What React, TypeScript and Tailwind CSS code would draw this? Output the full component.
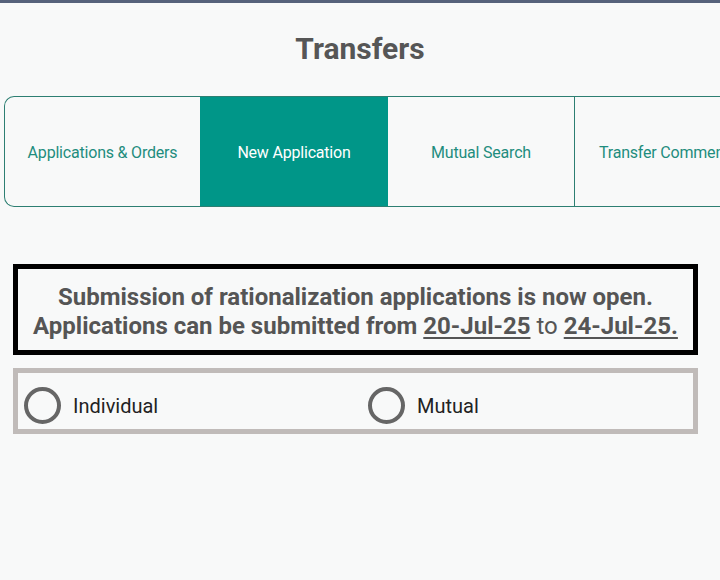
import React from "react";

export default function App() {
  const tabs = [
    { label: "Applications & Orders", w: "w-[195px]", active: false },
    { label: "New Application", w: "w-[188px]", active: true },
    { label: "Mutual Search", w: "w-[186px]", active: false },
    { label: "Transfer Comments", w: "w-[186px]", active: false },
  ];
  return (
    <div
      className="w-[720px] h-[580px] overflow-hidden bg-[#f8f9f9] flex flex-col"
      style={{ fontFamily: "Roboto, 'Liberation Sans', sans-serif" }}
    >
      <div className="h-[3px] bg-[#56627b] shrink-0" />
      <div className="h-[93px] shrink-0 flex items-center justify-center">
        <h1 className="text-[30px] font-bold text-[#565656] leading-none mt-[-1px]">Transfers</h1>
      </div>
      <div className="pl-[4px] overflow-hidden shrink-0">
        <div className="flex w-max h-[111px] border border-r-0 border-[#2d7f72] rounded-l-[10px] overflow-hidden">
          {tabs.map((t, i) => (
            <div
              key={t.label}
              className={
                "flex items-center justify-center shrink-0 text-[16px] tracking-[-0.2px] whitespace-nowrap pt-[2px] " +
                t.w +
                (t.active ? " bg-[#009688] text-white" : " text-[#1f8d7e]") +
                (i >= 3 ? " border-l border-[#2d7f72] justify-start pl-[24px]" : "")
              }
            >
              {t.label}
            </div>
          ))}
        </div>
      </div>
      <div className="ml-[13px] mt-[57px] w-[685px]">
        <div className="border-[5px] border-black h-[91px] flex flex-col items-center justify-center text-[24px] font-bold text-[#555555] leading-[29px] pt-[4px]">
          <div>Submission of rationalization applications is now open.</div>
          <div>
            Applications can be submitted from <span className="underline underline-offset-[3px]">20-Jul-25</span>{" "}
            <span className="font-normal">to</span>{" "}
            <span className="underline underline-offset-[3px]">24-Jul-25.</span>
          </div>
        </div>
        <div className="mt-[13px] h-[66px] border-[5px] border-[#c0bbb9] flex items-center pl-[6px] pt-[9px]">
          <div className="flex items-center w-[344px]">
            <div className="w-[37px] h-[37px] rounded-full border-[4px] border-[#666666]" />
            <span className="ml-[12px] text-[20px] text-[#222222]">Individual</span>
          </div>
          <div className="flex items-center">
            <div className="w-[37px] h-[37px] rounded-full border-[4px] border-[#666666]" />
            <span className="ml-[12px] text-[20px] text-[#222222]">Mutual</span>
          </div>
        </div>
      </div>
    </div>
  );
}
